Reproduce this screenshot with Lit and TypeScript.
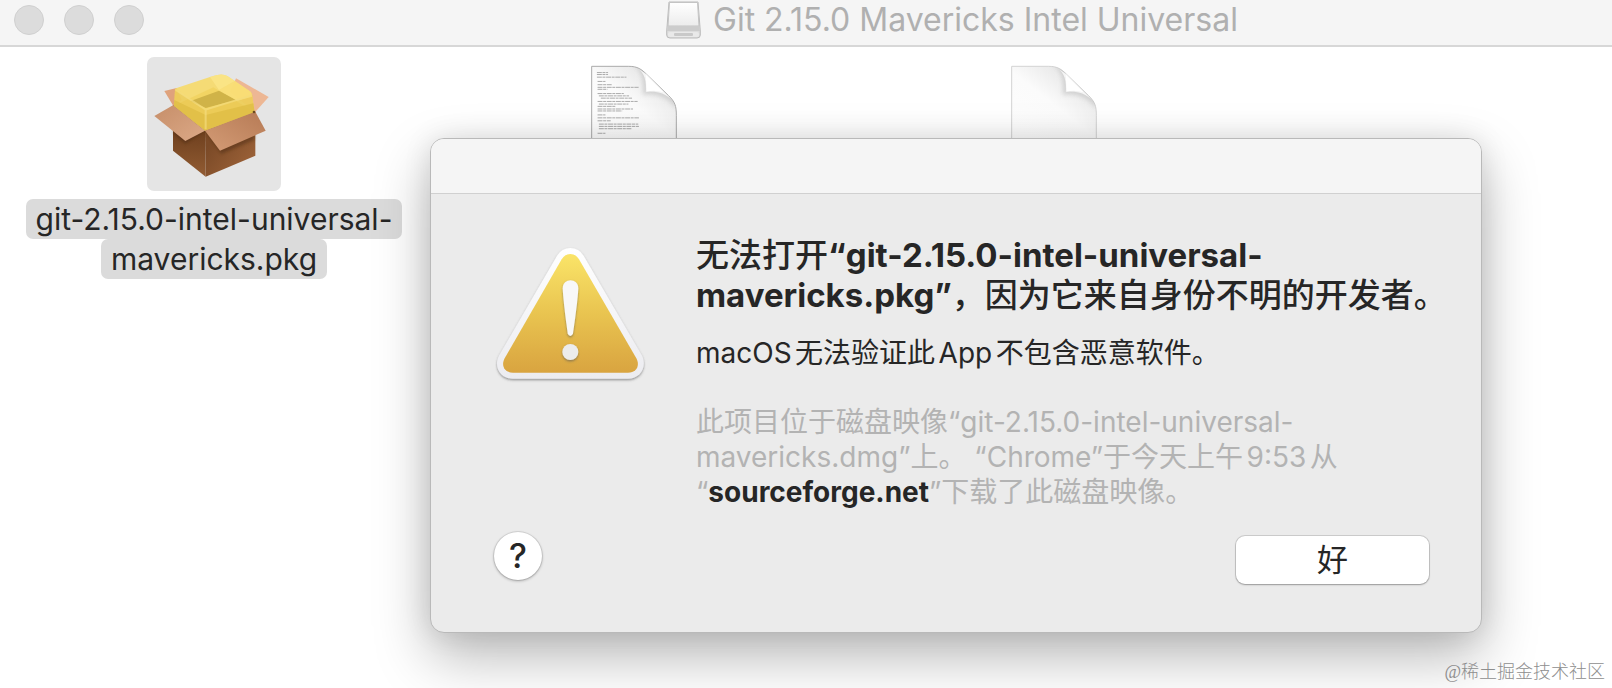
import { LitElement, html, css, svg } from "lit";
import { customElement, property } from "lit/decorators.js";

@customElement("package-icon")
class PackageIcon extends LitElement {
  static styles = css`
    :host { display: block; }
    svg { display: block; width: 100%; height: 100%; }
  `;
  render() {
    return html`<svg viewBox="441 171 402 402" aria-hidden="true">
      <defs>
        <linearGradient id="left" x1="0" y1="0" x2="0" y2="1"><stop offset=".3" stop-color="#6b3d1c"/><stop offset="1" stop-color="#925c33"/></linearGradient>
        <linearGradient id="right" x1="0" y1="0" x2="1" y2="1"><stop offset=".3" stop-color="#7b4a27"/><stop offset="1" stop-color="#a3673c"/></linearGradient>
        <linearGradient id="flapL" x1="0" y1="0" x2="1" y2="1"><stop offset="0" stop-color="#c68e69"/><stop offset="1" stop-color="#dca987"/></linearGradient>
        <linearGradient id="flapR" x1="1" y1="0" x2="0" y2="1"><stop offset="0" stop-color="#b67a55"/><stop offset="1" stop-color="#d49c76"/></linearGradient>
        <filter id="soft" x="-20%" y="-20%" width="140%" height="150%"><feGaussianBlur stdDeviation="5"/></filter>
      </defs>
      <path d="M493 273 530 264 545 300 520 318Z" fill="#dfa27c"/>
      <path d="M708 235 806 291 765 337 690 275Z" fill="#edb794"/>
      <path d="M519 316 615 392 617 530 519 452Z" fill="url(#left)"/>
      <path d="M615 392 766 335V467L617 530Z" fill="url(#right)"/>
      <path d="M521 400 556 432 600 402 615 392 664 462 763 420V400L640 380 521 380Z" fill="#3f220e" opacity=".4" filter="url(#soft)"/>
      <path d="M520 318 640 262 764 337 615 392Z" fill="#c9a43a"/>
      <path d="M525 268Q524 266 530 264L630 231Q665 217 682 228L752 275Q757 279 757 287L764 337 615 392 522 318Z" fill="#f6d968" opacity=".9"/>
      <path d="M523 300 617 345 760 310 764 337 615 392 522 318Z" fill="#d9b83f" opacity=".75"/>
      <path d="M525 270 617 331V390L522 317Z" fill="#e4c04a" opacity=".45"/>
      <path d="M617 331 757 285 762 337 617 391Z" fill="#e4c04a" opacity=".45"/>
      <path d="M572 303 657 272 708 300 617 324Z" fill="#d0b348"/>
      <path d="M630 231Q665 217 682 228L705 243 657 270Z" fill="#fbe68a" opacity=".8"/>
      <path d="M705 243 752 275 757 290 712 302 657 270Z" fill="#f9df78" opacity=".75"/>
      <path d="M527 270 617 329 755 286M617 329V388" fill="none" stroke="#f3dc7c" stroke-width="6" opacity=".7"/>
      <path d="M463 348 519 316 615 392 556 423Z" fill="url(#flapL)"/>
      <path d="M615 392 766 335 797 392 660 452Z" fill="url(#flapR)"/>
      <circle cx="762" cy="336" r="4" fill="#6b4a20"/>
    </svg>`;
  }
}

@customElement("document-icon")
class DocumentIcon extends LitElement {
  @property({ type: Boolean }) written = false;

  static styles = css`
    :host { display: block; }
    svg { display: block; width: 100%; height: auto; overflow: visible; }
  `;

  private static lines: [number, number, number][] = [
    [18, 20, 34], [18, 26, 34], [18, 34, 90], [20, 47, 24], [20, 57, 44], [20, 65, 125],
    [20, 71, 30], [20, 84, 80], [24, 91, 92], [30, 98, 95], [20, 108, 122], [24, 116, 90],
    [20, 123, 55], [20, 131, 108], [20, 137, 75], [20, 149, 24], [20, 158, 126], [20, 167, 40],
    [24, 177, 120], [24, 184, 122], [24, 191, 100], [20, 205, 24],
  ];

  render() {
    return html`<svg viewBox="0 0 262 340" aria-hidden="true">
      <defs>
        <linearGradient id="paper" x1="0" y1="1" x2=".6" y2="0"><stop offset="0" stop-color="#fff"/><stop offset=".7" stop-color="#fbfbfb"/><stop offset="1" stop-color="#e6e6e6"/></linearGradient>
        <linearGradient id="curl" x1="0" y1="1" x2="1" y2="0"><stop offset=".1" stop-color="#e2e2e2"/><stop offset=".5" stop-color="#f6f6f6"/><stop offset="1" stop-color="#ccc"/></linearGradient>
        <filter id="blur" x="-30%" y="-30%" width="160%" height="160%"><feGaussianBlur stdDeviation="7"/></filter>
        <clipPath id="sheet"><path d="M2 1H115C142 1 154 10 170 26L236 90C256 109 260 122 260 150V338H2Z"/></clipPath>
      </defs>
      <path d="M2 1H115C142 1 154 10 170 26L236 90C256 109 260 122 260 150V338H2Z"
        fill="url(#paper)" stroke=${this.written ? "#aaa" : "#d2d2d2"} stroke-width="3"/>
      <g clip-path="url(#sheet)">
        <path d="M130 0C160 14 160 50 158 88C195 84 225 88 262 130V0Z" fill="#bbb" opacity=".55" filter="url(#blur)"/>
      </g>
      ${this.written
        ? DocumentIcon.lines.map(([x, y, w]) => svg`<path d="M${x} ${y}h${w}" stroke="#aaa" stroke-width="3" stroke-dasharray="15 2 9 2"/>`)
        : null}
      <path d="M140 6C165 20 169 48 167 80C195 76 222 80 248 104L170 26Z" fill="url(#curl)"/>
      <path d="M167 27 169 78Q194 72 221 80Z" fill="#fff"/>
    </svg>`;
  }
}

@customElement("alert-dialog")
class AlertDialog extends LitElement {
  static styles = css`
    :host {
      display: block;
      box-sizing: border-box;
      overflow: hidden;
      color: #262626;
      background: #ebebeb;
      border: 1px solid #b9b9b9;
      border-radius: 14px;
      box-shadow: 0 24px 56px rgba(0, 0, 0, 0.28), 0 0 28px rgba(0, 0, 0, 0.1);
    }
    .bar { height: 55px; box-sizing: border-box; background: #f5f5f5; border-bottom: 1px solid #d0d0d0; }
    .body { display: grid; grid-template-columns: 150px 1fr; column-gap: 50px; padding: 41px 20px 0 65px; }
    .warning { display: block; width: 150px; height: 138px; margin-top: 12px; overflow: visible; }
    .copy { text-autospace: normal; }
    h1, p { margin: 0; }
    h1 { font-size: 33px; line-height: 40px; font-weight: 500; }
    h1 b { font-weight: 700; }
    .message { margin-top: 20px; font-size: 28px; line-height: 36px; }
    .details { margin-top: 34px; font-size: 28px; line-height: 35px; color: #b3b3b3; }
    strong { color: #262626; }
    .actions { display: flex; justify-content: space-between; padding: 22px 52px 48px 63px; }
    button { padding: 0; border: 0; background: #fff; color: #262626; font-family: inherit; }
    .help {
      width: 48px; height: 48px; border-radius: 50%; font-size: 34px; font-weight: 500; line-height: 48px;
      box-shadow: 0 0 0 1px rgba(0, 0, 0, 0.08), 0 1px 3px rgba(0, 0, 0, 0.3);
    }
    .ok {
      width: 193px; height: 48px; margin-top: 4px; border-radius: 9px; font-size: 31px; line-height: 46px;
      box-shadow: 0 0 0 1px rgba(0, 0, 0, 0.13), 0 1px 2px rgba(0, 0, 0, 0.25);
    }
  `;
  render() {
    return html`
      <div class="bar"></div>
      <div class="body">
        <svg class="warning" viewBox="230 350 450 414" aria-hidden="true">
          <defs>
            <linearGradient id="gold" x1="0" y1="0" x2="0" y2="1"><stop offset="0" stop-color="#fae468"/><stop offset=".5" stop-color="#e9c450"/><stop offset="1" stop-color="#d9a440"/></linearGradient>
            <linearGradient id="rim" x1="0" y1="0" x2="0" y2="1"><stop offset="0" stop-color="#fff"/><stop offset="1" stop-color="#ececf0"/></linearGradient>
            <filter id="drop" x="-10%" y="-10%" width="120%" height="125%"><feDropShadow dx="0" dy="4" stdDeviation="3" flood-color="#555" flood-opacity=".6"/></filter>
          </defs>
          <path filter="url(#drop)" fill="url(#rim)" d="M413 376Q427 353 453 353T493 376L667 674C685 708 664 745 626 745H280C242 745 221 708 240 674Z"/>
          <path fill="url(#gold)" d="M427 387Q437 371 453 371T479 387L651 684C663 706 651 727 626 727H281C256 727 244 706 256 684Z"/>
          <g filter="url(#drop)" fill="#f8f8f8">
            <path d="M430 474C430 442 477 442 477 474Q475 515 461 609Q459 617 453 617T445 609Q432 515 430 474Z"/>
            <circle cx="453" cy="665" r="24" fill="#ececec"/>
          </g>
        </svg>
        <div class="copy">
          <h1>无法打开<b>“git-2.15.0-intel-universal-mavericks.pkg”</b>，因为它来自身份不明的开发者。</h1>
          <p class="message">macOS无法验证此App不包含恶意软件。</p>
          <p class="details">此项目位于磁盘映像“git-2.15.0-intel-universal-mavericks.dmg”上。 “Chrome”于今天上午9:53从<br>“<strong>sourceforge.net</strong>”下载了此磁盘映像。</p>
        </div>
      </div>
      <div class="actions">
        <button class="help" aria-label="帮助">?</button>
        <button class="ok">好</button>
      </div>`;
  }
}

@customElement("app-root")
class AppRoot extends LitElement {
  static styles = css`
    :host {
      display: block;
      position: relative;
      min-height: 100vh;
      overflow: hidden;
      background: #fff;
      color: #262626;
      font-family: Inter, "Noto Sans CJK SC", sans-serif;
    }
    .titlebar {
      display: grid;
      grid-template-columns: minmax(150px, 652px) auto;
      align-items: center;
      box-sizing: border-box;
      height: 47px;
      padding: 0 14px 5px;
      background: #f5f5f5;
      border-bottom: 2px solid #d7d7d7;
    }
    .lights { display: flex; gap: 20px; }
    .lights button { width: 30px; height: 30px; padding: 0; border: 1px solid #d0d0d0; border-radius: 50%; background: #dcdcdc; }
    .title { display: flex; align-items: center; gap: 12px; color: #b0b0b0; font-size: 32px; line-height: 38px; white-space: nowrap; }
    .disk { width: 35px; height: 38px; flex: none; }
    .files { display: grid; grid-template-columns: repeat(auto-fill, 420px); padding: 10px 4px; }
    .file { display: flex; flex-direction: column; align-items: center; margin: 0; }
    .tile { display: flex; justify-content: center; box-sizing: border-box; width: 134px; height: 134px; border-radius: 7px; }
    .tile.selected { background: #e5e5e5; }
    .tile package-icon { width: 134px; }
    .tile document-icon { width: 86px; margin-top: 9px; }
    .name { margin-top: 8px; text-align: center; font-size: 30px; line-height: 40px; }
    .name span { padding: 2px 10px; border-radius: 7px; background: #dbdbdb; -webkit-box-decoration-break: clone; box-decoration-break: clone; }
    alert-dialog { position: absolute; top: 138px; left: 430px; right: 130px; }
    .watermark { position: absolute; right: 7px; bottom: 4px; color: #8e8e8e; font-family: "Liberation Serif", "Noto Sans CJK SC", serif; font-size: 18px; font-weight: 300; line-height: 24px; }
  `;
  render() {
    return html`
      <header class="titlebar">
        <div class="lights">
          <button aria-label="关闭"></button><button aria-label="最小化"></button><button aria-label="缩放"></button>
        </div>
        <div class="title">
          <svg class="disk" viewBox="0 0 35 38" aria-hidden="true">
            <defs><linearGradient id="d" x1="0" y1="0" x2="0" y2="1"><stop offset="0" stop-color="#fff"/><stop offset="1" stop-color="#ececec"/></linearGradient></defs>
            <path d="M3 1H32L34.300 30V34Q34.300 37 31 37H4Q.7 37 .7 34V30Z" fill="#ddd" stroke="#bbb"/>
            <path d="M3.500 1.500H31.500L33 25H2Z" fill="url(#d)" stroke="#c4c4c4"/>
            <path d="M2 25H33L34 30H1Z" fill="#ccc"/>
            <rect x="2" y="31" width="31" height="5" rx="2" fill="#e9e9e9"/>
            <rect x="8" y="32" width="19" height="3" rx="1" fill="#c9c9c9"/>
          </svg>
          <span>Git 2.15.0 Mavericks Intel Universal</span>
        </div>
      </header>
      <main class="files">
        <figure class="file">
          <div class="tile selected"><package-icon></package-icon></div>
          <figcaption class="name"><span>git-2.15.0-intel-universal-mavericks.pkg</span></figcaption>
        </figure>
        <figure class="file"><div class="tile"><document-icon written></document-icon></div></figure>
        <figure class="file"><div class="tile"><document-icon></document-icon></div></figure>
      </main>
      <alert-dialog role="alertdialog" lang="zh-CN"></alert-dialog>
      <div class="watermark">@稀土掘金技术社区</div>`;
  }
}
